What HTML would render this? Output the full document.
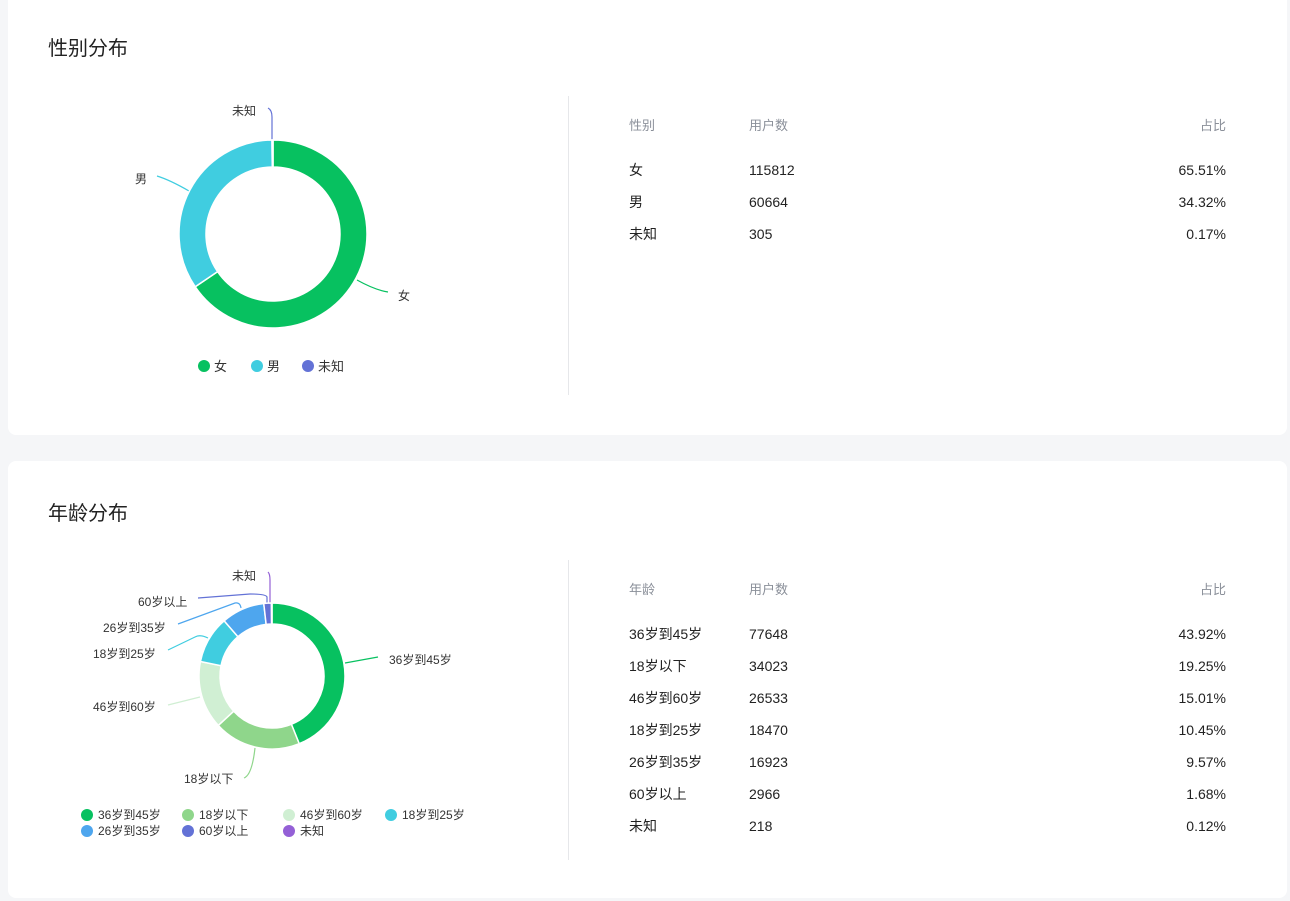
<!DOCTYPE html>
<html><head><meta charset="utf-8"><style>
body{margin:0;width:1290px;height:901px;background:#f5f6f8;font-family:"Liberation Sans","Noto Sans CJK SC",sans-serif;color:#222;position:relative;overflow:hidden}
.card{position:absolute;left:8px;width:1279px;background:#fff;border-radius:8px}
.t{position:absolute;left:40px;font-size:20px;color:#222}
.vl{position:absolute;left:560px;width:1px;background:#e6e7ea}
.tb{position:absolute;left:621px;width:605px;font-size:14px}
.r{position:absolute;left:0;width:605px;height:20px;line-height:20px}
.r span{position:absolute}
.h{color:#8a8f99;font-size:13px}
svg{position:absolute;left:0;top:0}
svg text{font-family:"Liberation Sans","Noto Sans CJK SC",sans-serif;font-size:12px;fill:#333}
</style></head><body>
<div class="card" style="top:-10px;height:445px"><div class="t" style="top:42px">性别分布</div><div class="vl" style="top:106px;height:299px"></div></div>
<div class="card" style="top:461px;height:437px"><div class="t" style="top:36px">年龄分布</div><div class="vl" style="top:99px;height:300px"></div></div>
<div class="tb" style="top:116px">
<div class="r h" style="top:0"><span style="left:8px">性别</span><span style="left:128px">用户数</span><span style="right:0">占比</span></div>
<div class="r" style="top:44px"><span style="left:8px">女</span><span style="left:128px">115812</span><span style="right:0">65.51%</span></div>
<div class="r" style="top:76px"><span style="left:8px">男</span><span style="left:128px">60664</span><span style="right:0">34.32%</span></div>
<div class="r" style="top:108px"><span style="left:8px">未知</span><span style="left:128px">305</span><span style="right:0">0.17%</span></div>
</div>
<div class="tb" style="top:580px">
<div class="r h" style="top:0"><span style="left:8px">年龄</span><span style="left:128px">用户数</span><span style="right:0">占比</span></div>
<div class="r" style="top:44px"><span style="left:8px">36岁到45岁</span><span style="left:128px">77648</span><span style="right:0">43.92%</span></div>
<div class="r" style="top:76px"><span style="left:8px">18岁以下</span><span style="left:128px">34023</span><span style="right:0">19.25%</span></div>
<div class="r" style="top:108px"><span style="left:8px">46岁到60岁</span><span style="left:128px">26533</span><span style="right:0">15.01%</span></div>
<div class="r" style="top:140px"><span style="left:8px">18岁到25岁</span><span style="left:128px">18470</span><span style="right:0">10.45%</span></div>
<div class="r" style="top:172px"><span style="left:8px">26岁到35岁</span><span style="left:128px">16923</span><span style="right:0">9.57%</span></div>
<div class="r" style="top:204px"><span style="left:8px">60岁以上</span><span style="left:128px">2966</span><span style="right:0">1.68%</span></div>
<div class="r" style="top:236px"><span style="left:8px">未知</span><span style="left:128px">218</span><span style="right:0">0.12%</span></div>
</div>
<svg id="s" width="1290" height="901">
<g fill="none" stroke-width="1.2">
<path d="M357 280 Q375 290 388 292" stroke="#07c160"/>
<path d="M189 191 Q170 180 157 176" stroke="#40cde0"/>
<path d="M272 140 L272 117 Q272 110 268 108" stroke="#6372d6"/>
<path d="M345 663 L378 657" stroke="#07c160"/>
<path d="M255 748 Q252 775 244 778" stroke="#8fd68b"/>
<path d="M200 697 L168 705" stroke="#d0efd3"/>
<path d="M208 638 Q200 634 195 637 L168 650" stroke="#40cde0"/>
<path d="M241 608 Q240 602 235 603 L178 624" stroke="#4ea6ee"/>
<path d="M267 603 L267 597 Q266 594 250 594 L198 598" stroke="#6372d6"/>
<path d="M270 603 L270 580 Q270 574 268 572" stroke="#9460d6"/>
</g>
<text x="398" y="300">女</text><text x="135" y="183">男</text><text x="232" y="115">未知</text>
<text x="389" y="664">36岁到45岁</text><text x="184" y="783">18岁以下</text><text x="93" y="711">46岁到60岁</text>
<text x="93" y="658">18岁到25岁</text><text x="103" y="632">26岁到35岁</text><text x="138" y="606">60岁以上</text><text x="232" y="580">未知</text>
<circle cx="204" cy="366" r="6" fill="#07c160"/><text x="214" y="371" style="font-size:13px">女</text>
<circle cx="257" cy="366" r="6" fill="#40cde0"/><text x="267" y="371" style="font-size:13px">男</text>
<circle cx="308" cy="366" r="6" fill="#6372d6"/><text x="318" y="371" style="font-size:13px">未知</text>
<g id="lg"></g>
</svg>
<script>
var s=document.getElementById('s');
function ring(cx,cy,R,r,data){var a=-Math.PI/2;data.forEach(function(d){var b=a+d[0]/100*2*Math.PI;var l=(b-a)>Math.PI?1:0;
var p='M'+(cx+R*Math.cos(a))+' '+(cy+R*Math.sin(a))+'A'+R+' '+R+' 0 '+l+' 1 '+(cx+R*Math.cos(b))+' '+(cy+R*Math.sin(b))+'L'+(cx+r*Math.cos(b))+' '+(cy+r*Math.sin(b))+'A'+r+' '+r+' 0 '+l+' 0 '+(cx+r*Math.cos(a))+' '+(cy+r*Math.sin(a))+'Z';
var e=document.createElementNS('http://www.w3.org/2000/svg','path');e.setAttribute('d',p);e.setAttribute('fill',d[1]);e.setAttribute('stroke','#fff');e.setAttribute('stroke-width','1.5');s.appendChild(e);a=b;});}
ring(273,234,94,67,[[65.51,'#07c160'],[34.32,'#40cde0'],[0.17,'#6372d6']]);
ring(272,676,73,52,[[43.92,'#07c160'],[19.25,'#8fd68b'],[15.01,'#d0efd3'],[10.45,'#40cde0'],[9.57,'#4ea6ee'],[1.68,'#6372d6'],[0.12,'#9460d6']]);
var L=[['36岁到45岁','#07c160',87,815],['18岁以下','#8fd68b',188,815],['46岁到60岁','#d0efd3',289,815],['18岁到25岁','#40cde0',391,815],['26岁到35岁','#4ea6ee',87,831],['60岁以上','#6372d6',188,831],['未知','#9460d6',289,831]];
var g=document.getElementById('lg');L.forEach(function(x){g.innerHTML+='<circle cx="'+x[2]+'" cy="'+x[3]+'" r="6" fill="'+x[1]+'"/><text x="'+(x[2]+11)+'" y="'+(x[3]+4)+'">'+x[0]+'</text>';});
</script>
</body></html>
